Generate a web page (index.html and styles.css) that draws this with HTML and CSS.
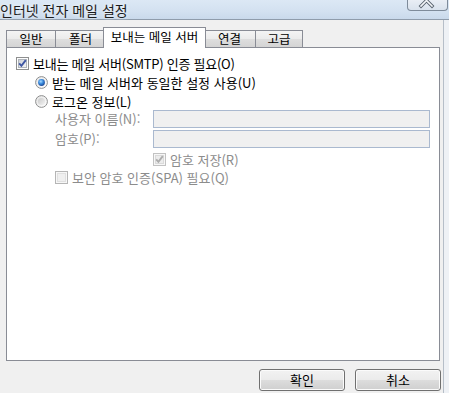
FILE: index.html
```html
<!DOCTYPE html>
<html lang="ko">
<head>
<meta charset="utf-8">
<title>인터넷 전자 메일 설정</title>
<link rel="stylesheet" href="styles.css">
</head>
<body>
<div class="window">
  <div class="titlebar">
    <span class="title">인터넷 전자 메일 설정</span>
    <div class="close">
      <svg width="39" height="10" viewBox="0 0 39 10">
        <path d="M13 -5 L24 6 M24 -5 L13 6" stroke="#5a6470" stroke-width="3.4" stroke-linecap="square" fill="none"/>
        <path d="M13 -5 L24 6 M24 -5 L13 6" stroke="#f4f6f9" stroke-width="1.6" stroke-linecap="square" fill="none"/>
      </svg>
    </div>
  </div>
  <div class="frame">
    <div class="client">
      <div class="tabs">
        <div class="tab t1">일반</div>
        <div class="tab t2">폴더</div>
        <div class="tab sel">보내는 메일 서버</div>
        <div class="tab t4">연결</div>
        <div class="tab t5">고급</div>
      </div>
      <div class="panel">
        <div class="row r1">
          <svg class="box" width="13" height="13" viewBox="0 0 13 13">
            <defs>
              <linearGradient id="cbIn" x1="0" y1="0" x2="1" y2="1">
                <stop offset="0" stop-color="#cbcfd5"/>
                <stop offset="1" stop-color="#f6f6f6"/>
              </linearGradient>
            </defs>
            <rect x="0.5" y="0.5" width="12" height="12" fill="#fdfdfd" stroke="#8e8f8f"/>
            <rect x="2.5" y="2.5" width="8" height="8" fill="url(#cbIn)" stroke="#b0b5bb"/>
            <path d="M3.2 6.4 L5.4 8.8 L9.8 3.2" stroke="#3e56a3" stroke-width="1.9" fill="none"/>
          </svg>
          <span class="lbl tight">보내는 메일 서버(SMTP) 인증 필요(O)</span>
        </div>
        <div class="row r2">
          <svg class="box" width="13" height="13" viewBox="0 0 13 13">
            <defs>
              <linearGradient id="rdOut" x1="0" y1="0" x2="1" y2="1">
                <stop offset="0" stop-color="#e6e6e6"/>
                <stop offset="1" stop-color="#ffffff"/>
              </linearGradient>
              <radialGradient id="rdDot" cx="0.4" cy="0.35" r="0.7">
                <stop offset="0" stop-color="#a9dcff"/>
                <stop offset="0.45" stop-color="#3f8fe0"/>
                <stop offset="1" stop-color="#16418f"/>
              </radialGradient>
            </defs>
            <circle cx="6.5" cy="6.5" r="5.9" fill="url(#rdOut)" stroke="#8e8f8f" stroke-width="1"/>
            <circle cx="6.5" cy="6.5" r="3.4" fill="url(#rdDot)"/>
          </svg>
          <span class="lbl">받는 메일 서버와 동일한 설정 사용(U)</span>
        </div>
        <div class="row r3">
          <svg class="box" width="13" height="13" viewBox="0 0 13 13">
            <defs>
              <linearGradient id="rdOut2" x1="0" y1="0" x2="1" y2="1">
                <stop offset="0" stop-color="#e2e2e2"/>
                <stop offset="1" stop-color="#ffffff"/>
              </linearGradient>
              <linearGradient id="rdIn2" x1="0" y1="0" x2="1" y2="1">
                <stop offset="0" stop-color="#c9c9c9"/>
                <stop offset="1" stop-color="#f3f3f3"/>
              </linearGradient>
            </defs>
            <circle cx="6.5" cy="6.5" r="5.9" fill="url(#rdOut2)" stroke="#8e8f8f" stroke-width="1"/>
            <circle cx="6.5" cy="6.5" r="3.6" fill="url(#rdIn2)"/>
          </svg>
          <span class="lbl">로그온 정보(L)</span>
        </div>
        <div class="row field">
          <span class="flabel">사용자 이름(N):</span>
          <div class="input"></div>
        </div>
        <div class="row field">
          <span class="flabel">암호(P):</span>
          <div class="input"></div>
        </div>
        <div class="row r6">
          <svg class="box" width="13" height="13" viewBox="0 0 13 13">
            <rect x="0.5" y="0.5" width="12" height="12" fill="#f7f7f7" stroke="#c2c2c2"/>
            <rect x="2.5" y="2.5" width="8" height="8" fill="#ececec" stroke="#dadada"/>
            <path d="M3.2 6.4 L5.4 8.8 L9.8 3.2" stroke="#adadad" stroke-width="1.9" fill="none"/>
          </svg>
          <span class="lbl dis">암호 저장(R)</span>
        </div>
        <div class="row r7">
          <svg class="box" width="13" height="13" viewBox="0 0 13 13">
            <rect x="0.5" y="0.5" width="12" height="12" fill="#f7f7f7" stroke="#b5b5b5"/>
            <rect x="2.5" y="2.5" width="8" height="8" fill="#efefef" stroke="#e0e0e0"/>
          </svg>
          <span class="lbl dis">보안 암호 인증(SPA) 필요(Q)</span>
        </div>
      </div>
      <div class="buttons">
        <button class="btn" type="button">확인</button>
        <button class="btn" type="button">취소</button>
      </div>
    </div>
    <div class="edge"></div>
  </div>
</div>
</body>
</html>
```
FILE: styles.css
```css
html, body {
  margin: 0;
  padding: 0;
}
body {
  background: #f0f0f0;
  font-family: "Noto Sans CJK KR", "Liberation Sans", sans-serif;
  font-size: 12px;
  color: #000;
}
.window {
  width: 449px;
  height: 393px;
  display: flex;
  flex-direction: column;
  overflow: hidden;
}
.titlebar {
  height: 19px;
  flex: 0 0 auto;
  border-bottom: 1px solid #8f9cab;
  background: linear-gradient(to bottom, #dce8f5 0%, #d3e1f0 60%, #c9d9eb 100%);
  display: flex;
  align-items: flex-start;
}
.title {
  font-size: 14px;
  line-height: 20px;
  color: #1c1c1c;
  letter-spacing: 0;
  white-space: nowrap;
  text-shadow: 0 0 4px rgba(255,255,255,0.9);
}
.close {
  margin-left: auto;
  margin-right: 1px;
  width: 41px;
  height: 11px;
  box-sizing: border-box;
  border: 1px solid #7e8b9a;
  border-top: none;
  border-radius: 0 0 4px 4px;
  background: linear-gradient(to bottom, #e9eef5, #d9e2ed);
  overflow: hidden;
}
.close svg {
  display: block;
}
.frame {
  flex: 1;
  display: flex;
}
.client {
  width: 443px;
  flex: 0 0 auto;
  box-sizing: border-box;
  padding-left: 6px;
}
.edge {
  flex: 1;
  border-left: 1px solid #b6bec8;
  background: #eef1f5;
}
.tabs {
  display: flex;
  align-items: flex-end;
  height: 20px;
  margin-top: 7px;
}
.tab {
  box-sizing: border-box;
  height: 17px;
  border: 1px solid #898c95;
  border-bottom: none;
  background: linear-gradient(to bottom, #f4f4f4 0%, #ebebeb 50%, #dedede 51%, #d4d4d4 100%);
  text-align: center;
  line-height: 16px;
  font-size: 12.5px;
  white-space: nowrap;
}
.t1 { width: 50px; }
.t2 { width: 51px; margin-left: -1px; }
.sel {
  width: 103px;
  height: 21px;
  margin-left: -3px;
  margin-bottom: -1px;
  background: #fff;
  line-height: 18px;
  position: relative;
  z-index: 1;
}
.t4 { width: 53px; margin-left: -3px; }
.t5 { width: 48px; margin-left: -1px; }
.panel {
  width: 434px;
  height: 314px;
  box-sizing: border-box;
  border: 1px solid #898c95;
  background: #fff;
  padding: 6px 0 0 9px;
}
.row {
  display: flex;
  align-items: center;
  height: 19px;
  white-space: nowrap;
  line-height: 15px;
  font-size: 13px;
}
.box {
  flex: 0 0 auto;
  display: block;
}
.lbl {
  margin-left: 4px;
}
.tight {
  letter-spacing: -0.25px;
}
.dis {
  color: #8c8c8c;
}
.r2 { margin-left: 19px; }
.r3 { margin-left: 19px; height: 18px; }
.field {
  height: 20px;
  align-items: flex-start;
  margin-left: 39px;
}
.flabel {
  width: 98px;
  flex: 0 0 auto;
  line-height: 18px;
  color: #8c8c8c;
}
.input {
  width: 277px;
  height: 18px;
  box-sizing: border-box;
  border: 1px solid #aab9cf;
  background: #f0f0f0;
}
.r6 { margin-left: 137px; height: 18px; }
.r7 { margin-left: 39px; }
.buttons {
  display: flex;
  justify-content: flex-end;
  gap: 10px;
  margin-top: 8px;
  padding-right: 2px;
}
.btn {
  width: 86px;
  height: 22px;
  box-sizing: border-box;
  border: 1px solid #707070;
  border-radius: 3px;
  background: linear-gradient(to bottom, #f2f2f2 0%, #ebebeb 50%, #dddddd 51%, #cfcfcf 100%);
  box-shadow: inset 0 0 0 1px #fbfbfb;
  font-family: "Noto Sans CJK KR", "Liberation Sans", sans-serif;
  font-size: 13px;
  line-height: 18px;
  color: #000;
  padding: 0;
}
```
